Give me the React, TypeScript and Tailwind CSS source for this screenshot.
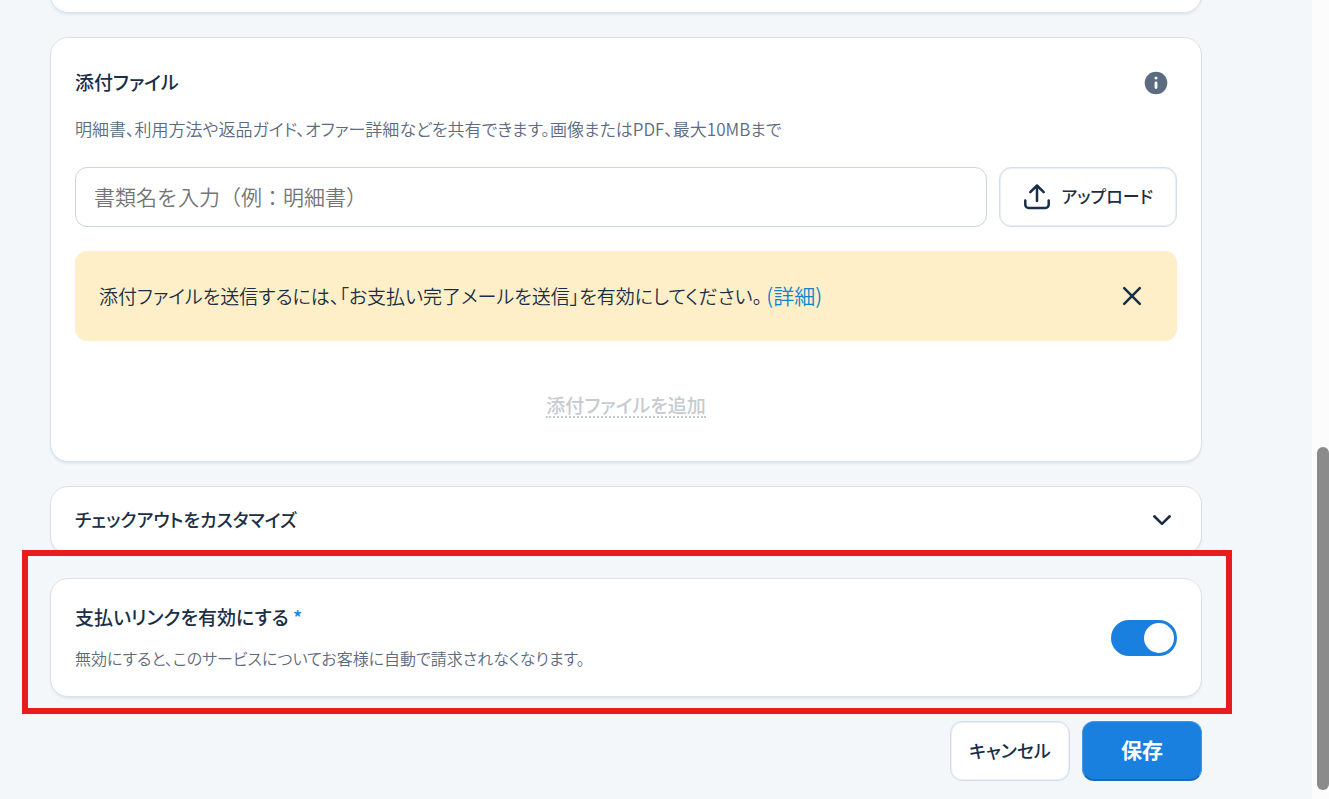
import React, { useState } from 'react';

const cardStyles = 'rounded-[18px] border border-[#d9e2ea] bg-white shadow-[0_2px_2px_rgba(20,50,80,0.07)]';
const outlineButton =
    'flex h-[60px] items-center justify-center rounded-xl border border-[#d3dee8] bg-white pb-0.5 font-medium shadow-[inset_0_0_0_1px_#e9eff4]';

const InfoIcon = () => (
    <svg viewBox="0 0 24 24" className="h-6 w-6" aria-hidden="true">
        <circle cx="12" cy="12" r="11.3" fill="#5b6c80" />
        <circle cx="12" cy="7" r="1.5" fill="#fff" />
        <path d="M12 11.8v4.8" stroke="#fff" strokeWidth="2.8" strokeLinecap="round" />
    </svg>
);

const UploadIcon = () => (
    <svg viewBox="0 0 28 28" className="h-7 w-7" fill="none" stroke="currentColor" strokeWidth="2.5" strokeLinecap="round" strokeLinejoin="round" aria-hidden="true">
        <path d="M14 19V4M7.3 10.2 14 3.5l6.7 6.7" />
        <path d="M2.3 18.5v4.2a3.2 3.2 0 0 0 3.2 3.2h17a3.2 3.2 0 0 0 3.2-3.2v-4.2" />
    </svg>
);

const CloseIcon = () => (
    <svg viewBox="0 0 24 24" className="h-6 w-6" stroke="currentColor" strokeWidth="2.6" strokeLinecap="round" aria-hidden="true">
        <path d="m4.2 4.2 15.6 15.6M19.8 4.2 4.2 19.8" />
    </svg>
);

const ChevronIcon = () => (
    <svg viewBox="0 0 30 30" className="h-[30px] w-[30px]" fill="none" stroke="currentColor" strokeWidth="2.6" strokeLinecap="round" strokeLinejoin="round" aria-hidden="true">
        <path d="m7.3 11.3 7.7 7.6 7.7-7.6" />
    </svg>
);

const AttachmentCard: React.FC = () => {
    const [name, setName] = useState('');

    return (
        <section className={`${cardStyles} p-6`}>
            <div className="flex items-start justify-between">
                <h2 className="text-[19px] leading-[40px] font-medium">添付ファイル</h2>
                <button type="button" aria-label="添付ファイル" className="flex h-[42px] w-[42px] items-center justify-center">
                    <InfoIcon />
                </button>
            </div>
            <label htmlFor="document-name" className="mt-3 block text-[17px] leading-[26px] font-[350] text-[#5b6b80]">
                明細書、利用方法や返品ガイド、オファー詳細などを共有できます。画像またはPDF、最大10MBまで
            </label>
            <div className="mt-[25px] flex gap-3">
                <input
                    id="document-name"
                    type="text"
                    value={name}
                    onChange={(e) => setName(e.target.value)}
                    placeholder="書類名を入力（例：明細書）"
                    className="h-[60px] min-w-0 flex-1 rounded-xl border border-[#c9d5e0] bg-white px-[18px] pb-0.5 text-[21px] font-[350] outline-none [font-feature-settings:normal] placeholder:text-[#757575]"
                />
                <button type="button" className={`${outlineButton} gap-2.5 px-[23px] text-[17px]`}>
                    <UploadIcon />
                    アップロード
                </button>
            </div>
            <div className="mt-6 flex items-center justify-between rounded-xl bg-[#feefc8] p-6">
                <p className="pb-0.5 text-[19px] leading-[30px] font-[350]">
                    添付ファイルを送信するには、「お支払い完了メールを送信」を有効にしてください。{' '}
                    <a href="#details" className="text-[21px] text-[#0d86cd]">(詳細)</a>
                </p>
                <button type="button" aria-label="閉じる" className="flex h-[42px] w-[42px] items-center justify-center">
                    <CloseIcon />
                </button>
            </div>
            <div className="mt-[50px] mb-4 flex h-[30px] justify-center">
                <button type="button" disabled className="h-[27px] border-b-2 border-dotted border-[#c5cbd0] text-[19px] leading-[27px] font-medium text-[#c5cbd0]">
                    添付ファイルを追加
                </button>
            </div>
        </section>
    );
};

const EnableLinkCard: React.FC = () => {
    const [enabled, setEnabled] = useState(true);

    return (
        <section className={`${cardStyles} flex items-center justify-between p-6`}>
            <div>
                <label htmlFor="enable-link" className="block pb-0.5 text-[19px] leading-7 font-medium">
                    支払いリンクを有効にする <span className="text-[#1980e0]">*</span>
                </label>
                <p className="mt-3 text-base leading-[27px] font-[350] text-[#5b6b80]">
                    無効にすると、このサービスについてお客様に自動で請求されなくなります。
                </p>
            </div>
            <input
                id="enable-link"
                type="checkbox"
                role="switch"
                checked={enabled}
                onChange={(e) => setEnabled(e.target.checked)}
                className="flex h-9 w-[66px] shrink-0 appearance-none items-center rounded-full bg-[#a9b5c1] p-[3px] before:h-[30px] before:w-[30px] before:rounded-full before:bg-white checked:justify-end checked:bg-[#1980e0]"
            />
        </section>
    );
};

const App: React.FC = () => {
    return (
        <div className="flex h-screen overflow-hidden bg-[#f3f7fa] font-['Noto_Sans_CJK_JP',sans-serif] text-[#1a2f47] [font-feature-settings:'palt']">
            <main className="flex min-w-0 flex-1 flex-col gap-6 pr-[110px] pl-[50px]">
                {/* tail of the previous card, scrolled past */}
                <div className="h-[13px] shrink-0 overflow-visible">
                    <div className={`${cardStyles} -mt-12 h-[61px]`} />
                </div>
                <AttachmentCard />
                <section className={`${cardStyles} shrink-0`}>
                    <button type="button" className="flex h-[66px] w-full items-center justify-between px-6 text-lg font-medium">
                        <span className="pb-0.5">チェックアウトをカスタマイズ</span>
                        <ChevronIcon />
                    </button>
                </section>
                <div className="relative">
                    <EnableLinkCard />
                    <div className="pointer-events-none absolute -top-7 -right-[30px] -bottom-[17px] -left-7 border-6 border-[#e81c1c]" />
                </div>
                <div className="flex justify-end gap-3">
                    <button type="button" className={`${outlineButton} w-[120px] text-lg`}>キャンセル</button>
                    <button type="button" className="h-[60px] w-[120px] rounded-xl border border-[#4596e4] border-b-2 border-b-[#1769ba] bg-[#1980e0] pb-0.5 text-[21px] font-semibold text-white">
                        保存
                    </button>
                </div>
            </main>
            <div className="flex w-[17px] flex-col items-end bg-[#fcfcfc] pt-[447px] pb-[9px]" aria-hidden="true">
                <div className="w-3 flex-1 rounded-full bg-[#8b8b8b]" />
            </div>
        </div>
    );
};

export default App;
